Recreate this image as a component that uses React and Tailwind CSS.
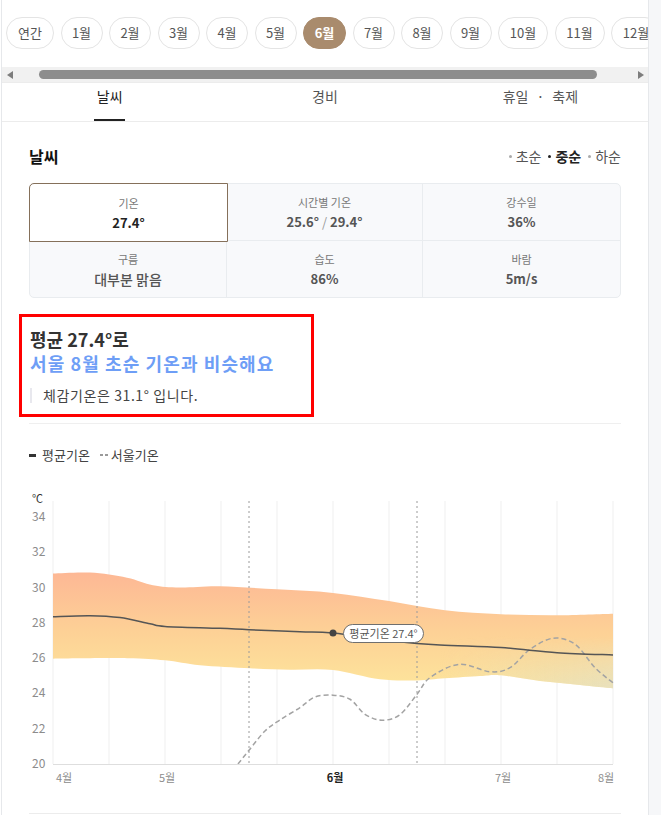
import React from "react";

const months = [
  { label: "연간", w: "w-[48px]" },
  { label: "1월", w: "w-[42px]" },
  { label: "2월", w: "w-[42px]" },
  { label: "3월", w: "w-[42px]" },
  { label: "4월", w: "w-[42px]" },
  { label: "5월", w: "w-[42px]" },
  { label: "6월", w: "w-[43px]", active: true },
  { label: "7월", w: "w-[42px]" },
  { label: "8월", w: "w-[42px]" },
  { label: "9월", w: "w-[42px]" },
  { label: "10월", w: "w-[50px]" },
  { label: "11월", w: "w-[50px]" },
  { label: "12월", w: "w-[50px]" },
];

// chart helpers (page coordinates, viewBox matches)
const ty = (t) => 763 - (t - 20) * 17.64;

const smooth = (pts, move = true) => {
  let d = `${move ? "M" : "L"}${pts[0][0]},${pts[0][1]}`;
  for (let i = 0; i < pts.length - 1; i++) {
    const p0 = pts[i - 1] || pts[i];
    const p1 = pts[i];
    const p2 = pts[i + 1];
    const p3 = pts[i + 2] || p2;
    const c1x = p1[0] + (p2[0] - p0[0]) / 6;
    const c1y = p1[1] + (p2[1] - p0[1]) / 6;
    const c2x = p2[0] - (p3[0] - p1[0]) / 6;
    const c2y = p2[1] - (p3[1] - p1[1]) / 6;
    d += ` C${c1x},${c1y} ${c2x},${c2y} ${p2[0]},${p2[1]}`;
  }
  return d;
};

const toPts = (arr) => arr.map(([x, t]) => [x, ty(t)]);

const upper = toPts([
  [53, 30.8], [90, 30.85], [127, 30.56], [153, 30.13], [180, 30.0], [220, 30.07],
  [277, 29.9], [333, 29.7], [389, 29.24], [445, 28.71], [501, 28.49], [557, 28.43], [613, 28.52],
]);
const lower = toPts([
  [53, 25.97], [127, 26.0], [165, 25.88], [200, 25.6], [250, 25.43], [290, 25.35],
  [333, 25.33], [380, 24.8], [417, 24.74], [445, 24.86], [480, 24.99], [501, 25.03],
  [540, 24.7], [580, 24.48], [613, 24.29],
]);
const mean = toPts([
  [53, 28.35], [90, 28.41], [120, 28.3], [150, 27.95], [165, 27.8], [220, 27.69],
  [249, 27.61], [300, 27.5], [333, 27.43], [397, 26.95], [440, 26.75], [501, 26.6],
  [557, 26.31], [613, 26.18],
]);
const seoul = toPts([
  [238, 20], [249, 20.78], [265, 21.87], [280, 22.5], [300, 23.2], [315, 23.8],
  [333, 23.9], [350, 23.67], [365, 22.82], [382, 22.48], [400, 22.8], [417, 23.95],
  [430, 24.9], [459, 25.65], [490, 25.23], [510, 25.46], [530, 26.5], [553, 27.13],
  [575, 26.79], [595, 25.46], [613, 24.6],
]);

const bandPath =
  smooth(upper) + " " + smooth([...lower].reverse(), false) + " Z";

const gridX = [53, 109, 165, 221, 277, 333, 389, 445, 501, 557, 613];
const yTicks = [34, 32, 30, 28, 26, 24, 22, 20];

function TempChart() {
  return (
    <svg
      width="592"
      height="305"
      viewBox="29 485 592 305"
      className="block"
    >
      <defs>
        <linearGradient id="band" gradientUnits="userSpaceOnUse" x1="0" y1="572" x2="0" y2="690">
          <stop offset="0" stopColor="#fdb895" />
          <stop offset="0.5" stopColor="#fdd196" />
          <stop offset="1" stopColor="#fde69c" />
        </linearGradient>
        <linearGradient id="fade" gradientUnits="userSpaceOnUse" x1="440" y1="0" x2="613" y2="0">
          <stop offset="0" stopColor="#e2dfc6" stopOpacity="0" />
          <stop offset="1" stopColor="#e2dfc6" stopOpacity="0.75" />
        </linearGradient>
        <linearGradient id="vmask" gradientUnits="userSpaceOnUse" x1="0" y1="635" x2="0" y2="685">
          <stop offset="0" stopColor="#000" />
          <stop offset="1" stopColor="#fff" />
        </linearGradient>
        <mask id="lowFade" maskUnits="userSpaceOnUse" x="29" y="485" width="592" height="305">
          <rect x="29" y="485" width="592" height="305" fill="url(#vmask)" />
        </mask>
        <clipPath id="plot">
          <rect x="53" y="495" width="561" height="268" />
        </clipPath>
      </defs>

      {gridX.map((x) => (
        <line key={x} x1={x} y1="500" x2={x} y2="763" stroke="#efefef" strokeWidth="1" />
      ))}

      <path d={bandPath} fill="url(#band)" />
      <path d={bandPath} fill="url(#fade)" mask="url(#lowFade)" />

      <line x1="249" y1="500" x2="249" y2="763" stroke="#9a9a9a" strokeWidth="1" strokeDasharray="2 3" />
      <line x1="417" y1="500" x2="417" y2="763" stroke="#9a9a9a" strokeWidth="1" strokeDasharray="2 3" />

      <g clipPath="url(#plot)">
        <path d={smooth(seoul)} fill="none" stroke="#a3a3a3" strokeWidth="1.5" strokeDasharray="5 3" />
      </g>
      <path d={smooth(mean)} fill="none" stroke="#555" strokeWidth="1.5" />

      <line x1="53" y1="763.5" x2="613" y2="763.5" stroke="#dedede" strokeWidth="1" />

      <text x="32" y="502" fontSize="11" fill="#333">℃</text>
      {yTicks.map((t) => (
        <text key={t} x="32" y={ty(t) + 4} fontSize="12" fill="#8c8c8c">
          {t}
        </text>
      ))}

      <text x="64" y="781" fontSize="11" fill="#8c8c8c" textAnchor="middle">4월</text>
      <text x="167" y="781" fontSize="11" fill="#8c8c8c" textAnchor="middle">5월</text>
      <text x="335" y="781" fontSize="11" fill="#222" fontWeight="700" textAnchor="middle">6월</text>
      <text x="503" y="781" fontSize="11" fill="#8c8c8c" textAnchor="middle">7월</text>
      <text x="606" y="781" fontSize="11" fill="#8c8c8c" textAnchor="middle">8월</text>

      <circle cx="333" cy={ty(27.43)} r="3.5" fill="#444" />
      <rect x="343.5" y="623.5" width="80" height="18" rx="9" fill="#fff" stroke="#6f6f6f" />
      <text x="383.5" y="636.5" fontSize="11" fill="#555" textAnchor="middle">평균기온 27.4°</text>
    </svg>
  );
}

function Cell({ label, value, selected, className = "" }) {
  return (
    <div
      className={
        "flex flex-col items-center justify-center gap-[6px] " +
        (selected ? "relative z-10 -m-px rounded-tl-[5px] border border-[#85705a] bg-white " : "") +
        className
      }
    >
      <span className="text-[11px] leading-[14px] text-[#777]">{label}</span>
      {value}
    </div>
  );
}

export default function App() {
  return (
    <div className="flex min-h-[815px] w-full bg-white font-['Noto_Sans_CJK_KR',sans-serif] text-[#333]">
      <div className="ml-px w-[648px] shrink-0 border-x border-[#e6e8eb] bg-white">
        {/* month pills */}
        <div className="flex h-[49px] gap-[6.5px] overflow-hidden pl-1 pt-[17px]">
          {months.map((m) => (
            <div
              key={m.label}
              className={
                "flex h-8 shrink-0 items-center justify-center rounded-full border text-[13px] " +
                m.w +
                (m.active
                  ? " border-[#a98b6d] bg-[#a98b6d] font-bold text-white"
                  : " border-[#e4e4e4] bg-white text-[#555]")
              }
            >
              {m.label}
            </div>
          ))}
        </div>

        {/* fake scrollbar */}
        <div className="mt-[18px] flex h-[15px] items-center bg-[#f1f1f1]">
          <span className="flex w-[15px] justify-center">
            <span className="h-0 w-0 border-y-[4px] border-r-[6px] border-y-transparent border-r-[#7d7d7d]" />
          </span>
          <span className="ml-[22px] h-[9px] w-[558px] rounded-full bg-[#8d8d8d]" />
          <span className="flex-1" />
          <span className="flex w-[15px] justify-center">
            <span className="h-0 w-0 border-y-[4px] border-l-[6px] border-y-transparent border-l-[#7d7d7d]" />
          </span>
        </div>

        {/* tabs */}
        <div className="grid h-10 grid-cols-3 border-y border-[#ececec] text-[14px]">
          <div className="flex h-full flex-col items-center pt-[3px]">
            <span className="leading-5 text-[#222]">날씨</span>
            <span className="mt-auto h-[2px] w-[31px] bg-[#222]" />
          </div>
          <div className="flex h-full flex-col items-center pt-[3px]">
            <span className="leading-5 text-[#555]">경비</span>
          </div>
          <div className="flex h-full flex-col items-center pt-[3px]">
            <span className="leading-5 text-[#555]">
              휴일<span className="mx-[8px]">·</span>축제
            </span>
          </div>
        </div>

        <div className="px-[27px]">
          {/* title */}
          <div className="mt-[22px] flex items-center justify-between">
            <h2 className="text-[16px] font-bold leading-6 text-[#111]">날씨</h2>
            <div className="flex items-center gap-[7px] text-[14px] leading-6">
              <span className="flex items-center gap-[4px] text-[#555]">
                <span className="h-[3px] w-[3px] rounded-full bg-[#aaa]" />
                초순
              </span>
              <span className="flex items-center gap-[4px] font-bold text-[#222]">
                <span className="h-[3px] w-[3px] rounded-full bg-[#222]" />
                중순
              </span>
              <span className="flex items-center gap-[4px] text-[#555]">
                <span className="h-[3px] w-[3px] rounded-full bg-[#aaa]" />
                하순
              </span>
            </div>
          </div>

          {/* stats grid */}
          <div className="mt-[15px] grid grid-cols-[197px_196px_197px] grid-rows-[57px_56px] rounded-[5px] border border-[#e9ecef] bg-[#f8f9fb]">
            <Cell
              selected
              label="기온"
              value={<span className="text-[13px] font-bold leading-[14px] text-[#222]">27.4°</span>}
            />
            <Cell
              className="border-b border-r border-[#e9ecef]"
              label="시간별 기온"
              value={
                <span className="text-[13px] font-semibold leading-[14px] text-[#555]">
                  25.6° <span className="font-normal text-[#999]">/</span> 29.4°
                </span>
              }
            />
            <Cell
              className="border-b border-[#e9ecef]"
              label="강수일"
              value={<span className="text-[13px] font-semibold leading-[14px] text-[#555]">36%</span>}
            />
            <Cell
              className="border-r border-[#e9ecef]"
              label="구름"
              value={<span className="text-[14px] font-medium leading-[14px] text-[#555]">대부분 맑음</span>}
            />
            <Cell
              className="border-r border-[#e9ecef]"
              label="습도"
              value={<span className="text-[13px] font-semibold leading-[14px] text-[#555]">86%</span>}
            />
            <Cell
              label="바람"
              value={<span className="text-[13px] font-semibold leading-[14px] text-[#555]">5m/s</span>}
            />
          </div>

          {/* summary */}
          <div className="-ml-[10px] mt-4 w-[295px] border-[3px] border-[#ff0000] pb-[9px] pl-[8px] pt-[10px]">
            <p className="text-[18px] font-bold leading-6 text-[#333]">평균 27.4°로</p>
            <p className="text-[18px] font-bold leading-6 tracking-[1.1px] text-[#6e9ef6]">서울 8월 초순 기온과 비슷해요</p>
            <div className="mt-[10px] flex items-center">
              <span className="h-[15px] w-[2px] bg-[#e8e8ee]" />
              <span className="ml-[11px] text-[14px] leading-5 tracking-[0.6px] text-[#444]">체감기온은 31.1° 입니다.</span>
            </div>
          </div>

          <div className="mt-[6px] border-t border-[#efefef]" />

          {/* legend */}
          <div className="mt-[22px] flex items-center text-[13px] leading-[18px] text-[#444]">
            <span className="mr-[6px] h-[3px] w-[7px] bg-[#333]" />
            평균기온
            <span className="ml-[10px] mr-[3px] flex gap-[2px]">
              <span className="h-[2px] w-[3px] bg-[#9a9a9a]" />
              <span className="h-[2px] w-[3px] bg-[#9a9a9a]" />
            </span>
            서울기온
          </div>

          <div className="mt-[22px]">
            <TempChart />
          </div>

          <div className="mt-[22px] border-t border-[#ececec]" />
        </div>
      </div>
      <div className="flex-1 bg-[#f6f7f9]" />
    </div>
  );
}
